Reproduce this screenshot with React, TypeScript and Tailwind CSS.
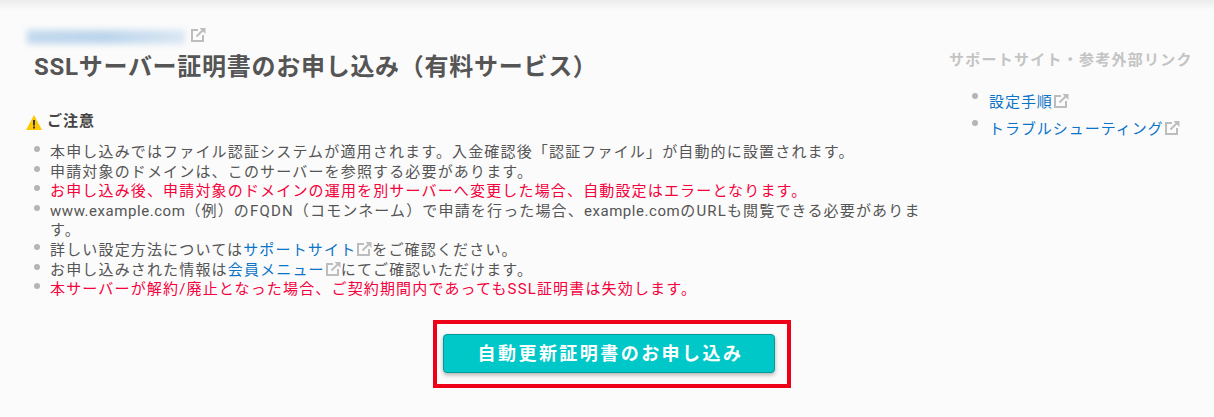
function ExtIcon({ className = '' }: { className?: string }) {
  return (
    <svg viewBox="0 0 16 16" className={`inline-block w-[16px] h-[16px] ${className}`} fill="none" stroke="#bdbdbd" strokeWidth="2">
      <path d="M8 3H2v11h11V8" />
      <path d="M6.5 9.5L13 3" />
      <path d="M9.5 1H15.5v6z" fill="#bdbdbd" stroke="none" />
    </svg>
  );
}

function Link({ children }: { children: string }) {
  return (
    <>
      <a className="text-[#0b74c8]">{children}</a>
      <ExtIcon className="align-[-2px]" />
    </>
  );
}

const red = 'text-[#f5003c]';

function Item({ children, className = '' }: { children: React.ReactNode; className?: string }) {
  return (
    <li className={`flex ${className}`}>
      <span className="w-[6px] h-[6px] mt-[3px] ml-[8px] mr-[10px] rounded-full bg-[#b5b5b5] shrink-0" />
      <span>{children}</span>
    </li>
  );
}

export default function App() {
  return (
    <div
      className="w-[1214px] h-[417px] overflow-hidden bg-[#fbfbfb] bg-gradient-to-b from-[#ececec] to-[#fbfbfb] bg-[length:100%_10px] bg-no-repeat text-[#555555] flex"
      style={{ fontFamily: 'Roboto, "Noto Sans CJK JP", sans-serif' }}
    >
      <main className="w-[938px] pl-[27px] pt-[26px] shrink-0">
        <div className="flex items-start h-[22px]">
          <div className="w-[158px] h-[14px] mt-[4px] bg-gradient-to-r from-[#c3d9ee] via-[#bcd5ec] to-[#dbe7f3] blur-[3px]" />
          <ExtIcon className="ml-[5px] mt-[1px]" />
        </div>
        <h1 className="ml-[7px] mt-[3px] text-[24px] leading-[32px] font-bold tracking-[0.72px] text-[#555555]">
          SSLサーバー証明書のお申し込み（有料サービス）
        </h1>
        <div className="flex items-center mt-[28px] h-[20px] -ml-[1px]">
          <svg viewBox="0 0 16 15" className="w-[16px] h-[15px] mt-[3px]">
            <path d="M8 0L16 15H0z" fill="#ffc800" />
            <rect x="7" y="5" width="2" height="5.5" fill="#333" />
            <rect x="7" y="11.5" width="2" height="2" fill="#333" />
          </svg>
          <h2 className="ml-[5px] text-[15px] font-bold tracking-[1px] text-[#444444]">ご注意</h2>
        </div>
        <ul className="mt-[12px] text-[15px] leading-[19.6px] tracking-[1.16px] w-[907px] -ml-[1px]">
          <Item>本申し込みではファイル認証システムが適用されます。入金確認後「認証ファイル」が自動的に設置されます。</Item>
          <Item>申請対象のドメインは、このサーバーを参照する必要があります。</Item>
          <Item className={red}>お申し込み後、申請対象のドメインの運用を別サーバーへ変更した場合、自動設定はエラーとなります。</Item>
          <Item>
            <span className="tracking-[0.55px]">www.example.com</span>（例）のFQDN（コモンネーム）で申請を行った場合、
            <span className="tracking-[0.55px]">example.com</span>のURLも閲覧できる必要があります。
          </Item>
          <Item>詳しい設定方法については<Link>サポートサイト</Link>をご確認ください。</Item>
          <Item>お申し込みされた情報は<Link>会員メニュー</Link>にてご確認いただけます。</Item>
          <Item className={red}>本サーバーが解約/廃止となった場合、ご契約期間内であってもSSL証明書は失効します。</Item>
        </ul>
        <div className="mt-[20px] ml-[406px] w-[358px] h-[68px] border-[4px] border-[#ee0018] pt-[10px] pl-[6px]">
          <button className="w-[332px] h-[39px] pl-[3px] rounded-[4px] bg-[#00c8c8] border border-[#009a9a] shadow-[0_2px_4px_rgba(0,0,0,0.3)] text-white text-[18px] font-bold tracking-[2.45px]">
            自動更新証明書のお申し込み
          </button>
        </div>
      </main>
      <aside className="flex-1 pt-[50px] pl-[11px]">
        <h3 className="text-[15px] leading-[20px] font-bold tracking-[1.25px] text-[#c4c4c4] whitespace-nowrap">サポートサイト・参考外部リンク</h3>
        <ul className="mt-[19px] text-[15px] leading-[27px] tracking-[0.95px]">
          {['設定手順', 'トラブルシューティング'].map((label) => (
            <li key={label} className="flex pl-[23px]">
              <span className="w-[6px] h-[6px] mt-[4px] mr-[11px] rounded-full bg-[#b5b5b5] shrink-0" />
              <span className="whitespace-nowrap"><Link>{label}</Link></span>
            </li>
          ))}
        </ul>
      </aside>
    </div>
  );
}
